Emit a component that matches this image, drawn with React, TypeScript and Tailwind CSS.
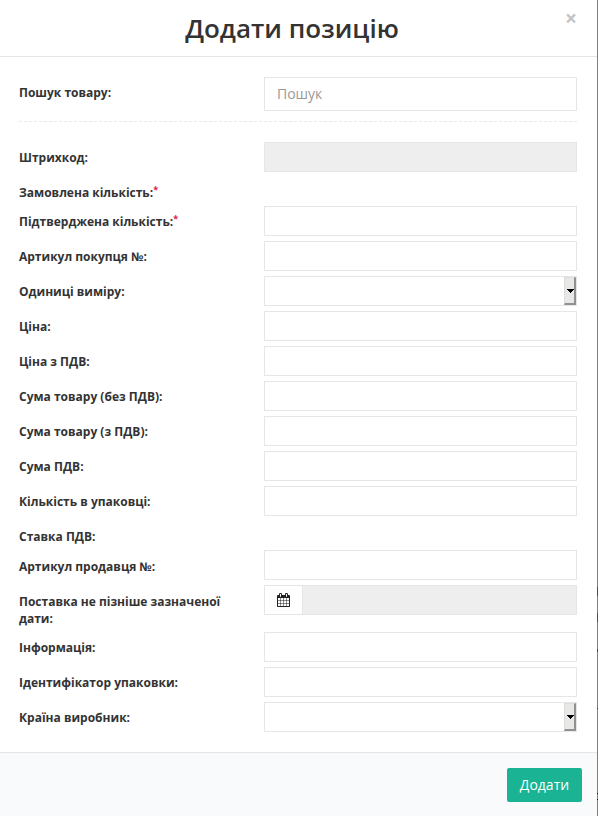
type Row = {
  label: string;
  kind: "input" | "disabled" | "select" | "date" | "none";
  h: string;
  req?: boolean;
  low?: boolean;
};

const rows: Row[] = [
  { label: "Штрихкод:", kind: "disabled", h: "h-[35px]" },
  { label: "Замовлена кількість:", kind: "none", h: "h-[29px]", req: true },
  { label: "Підтверджена кількість:", kind: "input", h: "h-[35px]", req: true },
  { label: "Артикул покупця №:", kind: "input", h: "h-[35px]" },
  { label: "Одиниці виміру:", kind: "select", h: "h-[35px]" },
  { label: "Ціна:", kind: "input", h: "h-[35px]" },
  { label: "Ціна з ПДВ:", kind: "input", h: "h-[35px]" },
  { label: "Сума товару (без ПДВ):", kind: "input", h: "h-[35px]" },
  { label: "Сума товару (з ПДВ):", kind: "input", h: "h-[35px]" },
  { label: "Сума ПДВ:", kind: "input", h: "h-[35px]" },
  { label: "Кількість в упаковці:", kind: "input", h: "h-[35px]" },
  { label: "Ставка ПДВ:", kind: "none", h: "h-[29px]" },
  { label: "Артикул продавця №:", kind: "input", h: "h-[35px]", low: true },
  { label: "Поставка не пізніше зазначеної дати:", kind: "date", h: "h-[47px]", low: true },
  { label: "Інформація:", kind: "input", h: "h-[35px]" },
  { label: "Ідентифікатор упаковки:", kind: "input", h: "h-[35px]" },
  { label: "Країна виробник:", kind: "select", h: "h-[35px]" },
];

function CalendarIcon() {
  return (
    <svg width="13" height="14" viewBox="0 0 1664 1792" fill="currentColor">
      <path d="M128 1664h288v-288h-288v288zm352 0h320v-288h-320v288zm-352-352h288v-320h-288v320zm352 0h320v-320h-320v320zm-352-384h288v-288h-288v288zm736 736h320v-288h-320v288zm-384-736h320v-288h-320v288zm768 736h288v-288h-288v288zm-384-352h320v-320h-320v320zm-352-864v-288q0-13-9.5-22.5t-22.5-9.5h-64q-13 0-22.5 9.5t-9.5 22.5v288q0 13 9.5 22.5t22.5 9.5h64q13 0 22.5-9.5t9.5-22.5zm736 864h288v-320h-288v320zm-384-384h320v-288h-320v288zm384 0h288v-288h-288v288zm32-480v-288q0-13-9.5-22.5t-22.5-9.5h-64q-13 0-22.5 9.5t-9.5 22.5v288q0 13 9.5 22.5t22.5 9.5h64q13 0 22.5-9.5t9.5-22.5zm384-64v1280q0 52-38 90t-90 38h-1408q-52 0-90-38t-38-90v-1280q0-52 38-90t90-38h128v-96q0-66 47-113t113-47h64q66 0 113 47t47 113v96h384v-96q0-66 47-113t113-47h64q66 0 113 47t47 113v96h128q52 0 90 38t38 90z" />
    </svg>
  );
}

function Field({ kind }: { kind: Row["kind"] }) {
  if (kind === "none") return null;
  if (kind === "disabled") return <div className="h-[30px] w-[313px] border border-[#e5e6e7] bg-[#eeeeee]" />;
  if (kind === "select")
    return (
      <div className="flex h-[30px] w-[313px] justify-end border border-[#e5e6e7] bg-white">
        <div className="flex h-7 w-3 border-t border-r-2 border-b-2 border-l border-t-[#dcdcdc] border-r-[#919191] border-b-[#919191] border-l-[#dcdcdc] bg-[#e8e8e7] pt-[11px] pl-0.5">
          <svg className="shrink-0" width="7" height="4" viewBox="0 0 7 4">
            <path d="M0 0h7v1H6v1H5v1H4v1H3V3H2V2H1V1H0z" fill="#000" />
          </svg>
        </div>
      </div>
    );
  if (kind === "date")
    return (
      <div className="flex h-[30px] w-[313px] border border-[#e5e6e7] bg-[#eeeeee]">
        <div className="flex w-[38px] items-center justify-center border-r border-[#e5e6e7] bg-white text-[#222]">
          <CalendarIcon />
        </div>
      </div>
    );
  return <div className="h-[30px] w-[313px] border border-[#e5e6e7] bg-white" />;
}

// Sliver of the dimmed page behind the dialog's right edge.
function Backdrop() {
  return (
    <div className="flex w-px shrink-0 flex-col bg-[#808080]">
      <i className="mt-[587px] h-[9px] bg-[#2c566b]" />
      <i className="mt-[17px] h-[9px] bg-[#2c5f6b]" />
      <i className="mt-[27px] h-[3px] bg-[#2c4a6b]" />
      <i className="mt-[56px] h-px bg-[#333]" />
      <i className="mt-[84px] h-px bg-[#111]" />
      <i className="mt-[5px] h-px bg-[#111]" />
    </div>
  );
}

export default function App() {
  return (
    <div className="flex h-[816px] w-[598px] bg-white font-['Open_Sans',sans-serif] text-[#333]">
      <div className="flex w-[597px] shrink-0 flex-col">
        <header className="relative flex h-[57px] shrink-0 justify-center border-b border-[#e5e5e5]">
          <h1 className="pt-[10px] pr-[13px] text-[26px] leading-[37px] font-semibold">Додати позицію</h1>
          <span className="absolute top-2 right-5 text-[21px] leading-5 font-bold text-[#c4c4c4]">×</span>
        </header>
        <main className="h-[695px] shrink-0 pt-5 pr-5 pl-[19px]">
          <div className="flex h-[45px] border-b border-dashed border-[#e7eaec]">
            <div className="w-[245px] pt-[7px] text-[12px] leading-[17px] font-bold">Пошук товару:</div>
            <div className="h-[34px] w-[313px] border border-[#e5e6e7] px-3 text-[14px] leading-8 text-[#999]">Пошук</div>
          </div>
          <div className="pt-5">
            {rows.map((r) => (
              <div key={r.label} className={`flex ${r.h}`}>
                <div className={`w-[245px] pr-8 text-[12px] leading-[17px] font-bold ${r.low ? "pt-2" : "pt-[7px]"}`}>
                  {r.label}
                  {r.req && <sup className="text-[9px] leading-none text-[#e6194b]">*</sup>}
                </div>
                <Field kind={r.kind} />
              </div>
            ))}
          </div>
        </main>
        <footer className="flex grow justify-end border-t border-[#e5e5e5] bg-[#f9fafc] pt-[15px] pr-[15px]">
          <button className="h-[34px] w-[75px] rounded-[2px] bg-[#1ab394] pb-0.5 text-[14px] text-white">Додати</button>
        </footer>
      </div>
      <Backdrop />
    </div>
  );
}
